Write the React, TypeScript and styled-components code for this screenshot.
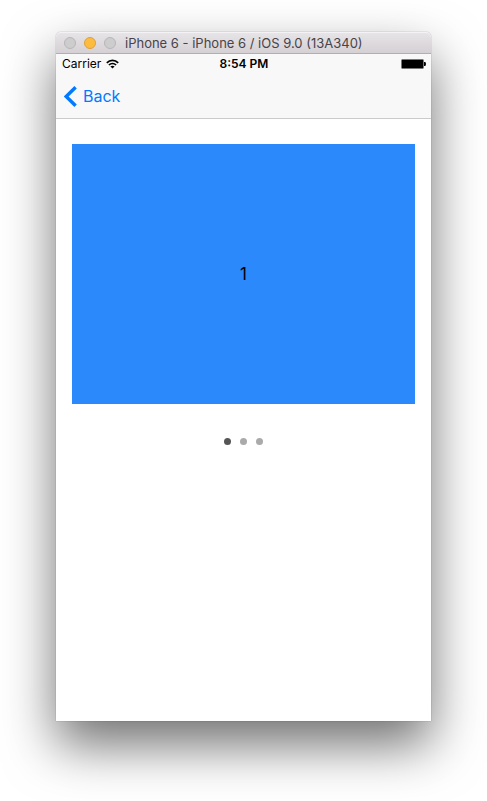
import React, { useState } from "react";
import styled, { createGlobalStyle } from "styled-components";

const GlobalStyle = createGlobalStyle`
  *, *::before, *::after { box-sizing: border-box; }
  html, body { margin: 0; background: #ffffff; }
  body { font-family: Inter, "Liberation Sans", sans-serif; color: #000000; }
  button { margin: 0; padding: 0; border: 0; background: none; font: inherit; }
`;

const Desktop = styled.main`
  display: flex;
  min-height: 100vh;
  padding: 32px 56px 80px;
  overflow: hidden;
`;

const SimulatorWindow = styled.section`
  display: flex;
  flex: 1;
  flex-direction: column;
  min-width: 0;
  border-radius: 5px 5px 0 0;
  background: #ffffff;
  box-shadow: 0 0 1px rgba(0, 0, 0, 0.6), 0 24px 52px rgba(0, 0, 0, 0.56);
`;

const TitleBar = styled.header`
  display: flex;
  align-items: center;
  height: 22px;
  padding: 0 8px;
  border-bottom: 1px solid #b3aeb3;
  border-radius: 5px 5px 0 0;
  background: linear-gradient(#e8e5e8, #d4d0d4);
  box-shadow: inset 0 1px #f4f2f4;
`;

const WindowControls = styled.div`
  display: flex;
  gap: 8px;
`;

const WindowControl = styled.button<{ $fill: string; $edge: string }>`
  width: 12px;
  height: 12px;
  border: 1px solid ${({ $edge }) => $edge};
  border-radius: 50%;
  background: ${({ $fill }) => $fill};
`;

const WindowTitle = styled.h1`
  margin: 0 0 0 9px;
  font: 400 13px/20px Inter, "Liberation Sans", sans-serif;
  color: #48434a;
  white-space: nowrap;
`;

const TopBars = styled.div`
  border-bottom: 1px solid #cbcbcb;
  background: #f8f8f8;
`;

const StatusBar = styled.div`
  display: grid;
  grid-template-columns: 1fr auto 1fr;
  align-items: center;
  height: 20px;
  padding: 0 5px 0 6px;
  font-size: 12px;
  line-height: 20px;
`;

const Carrier = styled.div`
  display: flex;
  align-items: center;
  gap: 5px;
`;

const Clock = styled.time`
  font-weight: 600;
`;

const BatterySlot = styled.div`
  display: flex;
  justify-content: flex-end;
`;

const NavigationBar = styled.nav`
  display: flex;
  align-items: center;
  height: 44px;
  padding: 0 8px;
`;

const BackButton = styled.button`
  display: flex;
  align-items: center;
  gap: 6px;
  color: #007aff;
  font-size: 16px;
  line-height: 22px;
`;

const Content = styled.div`
  display: flex;
  flex: 1;
  flex-direction: column;
  gap: 34px;
  padding: 25px 16px;
`;

const Slide = styled.div`
  display: flex;
  align-items: center;
  justify-content: center;
  height: 260px;
  background: #2b89fc;
  font-size: 17px;
  line-height: 22px;
`;

const PageControl = styled.div`
  display: flex;
  justify-content: center;
  gap: 9px;
`;

const PageDot = styled.button<{ $active: boolean }>`
  width: 7px;
  height: 7px;
  border-radius: 50%;
  background: ${({ $active }) => ($active ? "#555555" : "#aaaaaa")};
`;

const controls = [
  { label: "Close", fill: "#cecdce", edge: "#b8b6b8" },
  { label: "Minimize", fill: "#fdbc40", edge: "#dea03a" },
  { label: "Zoom", fill: "#cecdce", edge: "#b8b6b8" },
];

const WifiIcon = () => (
  <svg width="13" height="10" viewBox="0 0 13 10" aria-label="Wi-Fi">
    <g fill="none" stroke="#000" strokeWidth="1.7">
      <path d="M.8 3.8C4 .5 9 .5 12.2 3.8" />
      <path d="M2.9 6C5 4 8 4 10.1 6" />
    </g>
    <path d="M6.5 9.6 4.4 7.5Q6.5 5.8 8.6 7.5Z" />
  </svg>
);

const BatteryIcon = () => (
  <svg width="25" height="10" viewBox="0 0 25 10" aria-label="Battery full">
    <rect x=".5" y=".5" width="22" height="9" rx="1" fill="#000" stroke="#777" />
    <path d="M23 3h1q1 0 1 2t-1 2h-1Z" />
  </svg>
);

const ChevronIcon = () => (
  <svg width="13" height="21" viewBox="0 0 13 21" aria-hidden="true">
    <path d="M11.6 1.3 2.2 10.5l9.4 9.2" fill="none" stroke="currentColor" strokeWidth="3.4" />
  </svg>
);

export default function App() {
  const [page, setPage] = useState(1);
  return (
    <>
      <GlobalStyle />
      <Desktop>
        <SimulatorWindow>
          <TitleBar>
            <WindowControls>
              {controls.map(({ label, fill, edge }) => (
                <WindowControl key={label} type="button" aria-label={label} $fill={fill} $edge={edge} />
              ))}
            </WindowControls>
            <WindowTitle>iPhone 6 - iPhone 6 / iOS 9.0 (13A340)</WindowTitle>
          </TitleBar>
          <TopBars>
            <StatusBar>
              <Carrier>
                <span>Carrier</span>
                <WifiIcon />
              </Carrier>
              <Clock>8:54 PM</Clock>
              <BatterySlot>
                <BatteryIcon />
              </BatterySlot>
            </StatusBar>
            <NavigationBar>
              <BackButton type="button">
                <ChevronIcon />
                <span>Back</span>
              </BackButton>
            </NavigationBar>
          </TopBars>
          <Content>
            <Slide>{page}</Slide>
            <PageControl>
              {[1, 2, 3].map((n) => (
                <PageDot
                  key={n}
                  type="button"
                  aria-label={`Page ${n}`}
                  $active={n === page}
                  onClick={() => setPage(n)}
                />
              ))}
            </PageControl>
          </Content>
        </SimulatorWindow>
      </Desktop>
    </>
  );
}
